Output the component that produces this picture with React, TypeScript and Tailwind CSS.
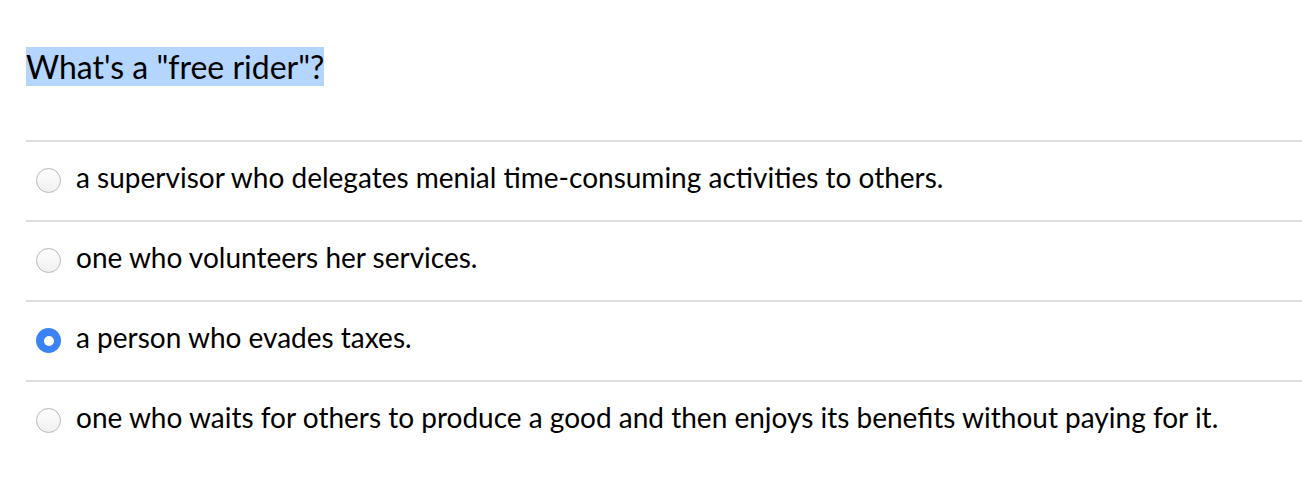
import React from "react";

const options = [
  "a supervisor who delegates menial time-consuming activities to others.",
  "one who volunteers her services.",
  "a person who evades taxes.",
  "one who waits for others to produce a good and then enjoys its benefits without paying for it.",
];

const Radio = ({ checked }: { checked: boolean }) =>
  checked ? (
    <span className="w-[25px] h-[25px] rounded-full bg-[#3b82f6] flex items-center justify-center shrink-0 mb-[1px]">
      <span className="w-[10px] h-[10px] rounded-full bg-white" />
    </span>
  ) : (
    <span className="w-[25px] h-[25px] rounded-full border border-[#b8b8b8] bg-gradient-to-b from-white to-[#f0f0f0] shrink-0 mb-[1px]" />
  );

export default function App() {
  const selected = 2;

  return (
    <div
      className="w-full min-h-[500px] bg-white text-black pl-[26px] pt-[47px]"
      style={{ fontFamily: "Lato, 'Liberation Sans', sans-serif" }}
    >
      <h1 className="text-[32px] leading-[39px] font-normal">
        <span className="bg-[#b4d5fe]">What's a "free rider"?</span>
      </h1>
      <div className="mt-[54px] flex flex-col">
        {options.map((opt, i) => (
          <label
            key={i}
            className="h-[80px] flex items-center gap-[15px] pl-[10px] border-t-2 border-[#dddddd]"
          >
            <Radio checked={i === selected} />
            <span className="text-[28px] leading-none pb-[8px]">{opt}</span>
          </label>
        ))}
      </div>
    </div>
  );
}
